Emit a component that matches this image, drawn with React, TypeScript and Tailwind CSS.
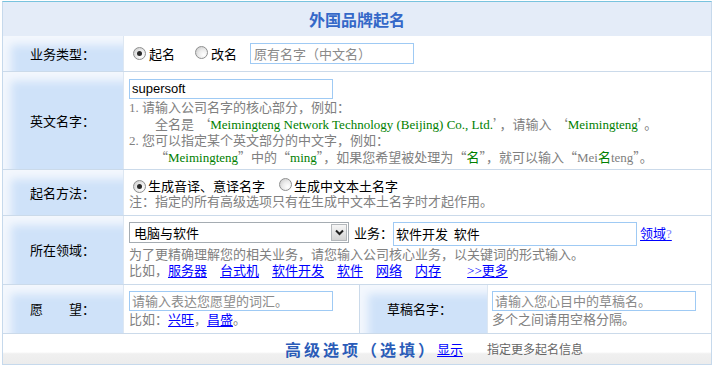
import * as React from "react"

const cjk = "font-['Noto_Sans_CJK_SC',sans-serif]"

function Q({ children }: { children: React.ReactNode }) {
  return <span className={cjk}>{children}</span>
}

function G({ children }: { children: React.ReactNode }) {
  return <span className="text-[#008000]">{children}</span>
}

function A({ children, className = "" }: { children: React.ReactNode; className?: string }) {
  return <a className={"text-[#0000ff] underline underline-offset-2 " + className}>{children}</a>
}

function Radio({ checked }: { checked?: boolean }) {
  return (
    <span className="inline-flex h-[13px] w-[13px] shrink-0 items-center justify-center rounded-full border border-[#8e8f8f] bg-[radial-gradient(circle_at_70%_70%,#ffffff_0%,#ececec_45%,#c4c4c4_100%)]">
      {checked && <span className="h-[5px] w-[5px] rounded-full bg-[#2a2a2a]" />}
    </span>
  )
}

function Label({ children, className = "" }: { children: React.ReactNode; className?: string }) {
  return (
    <div
      className={
        "flex shrink-0 items-center border-r border-[#dde7f2] bg-[#cfe2f9] pl-[27px] text-black shadow-[inset_12px_13px_8px_-4px_#f3f7fd] " +
        cjk +
        " " +
        className
      }
    >
      {children}
    </div>
  )
}

export default function App() {
  return (
    <div className="h-[368px] w-[714px] bg-white pl-[2px] pt-[1px] font-['Liberation_Serif','Noto_Sans_CJK_SC',serif] text-[13px] leading-[16px] text-[#808080]">
      <div className="flex h-[364px] w-[710px] flex-col border border-[#c6d9ec] border-t-[#78c3de]">
        {/* title */}
        <div className={"flex h-[34px] shrink-0 items-center justify-center bg-[#e4ecf8] text-[16px] font-bold text-[#3468c8] " + cjk}>
          外国品牌起名
        </div>

        {/* 业务类型 */}
        <div className="flex h-[36px] shrink-0 border-b border-[#cbdaea]">
          <Label className="w-[121px]">业务类型：</Label>
          <div className={"flex flex-1 items-center pl-[9px] text-black " + cjk}>
            <Radio checked />
            <span className="ml-[3px]">起名</span>
            <span className="ml-[20px]">
              <Radio />
            </span>
            <span className="ml-[3px]">改名</span>
            <div className="ml-[13px] flex h-[21px] w-[164px] items-center border border-[#9fcaf4] pl-[3px] text-[#8a8a8a]">
              原有名字（中文名）
            </div>
          </div>
        </div>

        {/* 英文名字 */}
        <div className="flex h-[98px] shrink-0 border-b border-[#cbdaea]">
          <Label className="w-[121px]">英文名字：</Label>
          <div className="flex-1 pl-[5px] pt-[7px]">
            <div className="flex h-[20px] w-[204px] items-center border border-[#9fcaf4] pl-[2px] font-['Liberation_Sans',sans-serif] text-black">
              supersoft
            </div>
            <div className="mt-[1px]">1. 请输入公司名字的核心部分，例如：</div>
            <div className="pl-[26px]">
              全名是 <Q>‘</Q>
              <G>Meimingteng Network Technology (Beijing) Co., Ltd.</G>
              <Q>’</Q>，请输入 <Q>‘</Q>
              <G>Meimingteng</G>
              <Q>’</Q>。
            </div>
            <div>2. 您可以指定某个英文部分的中文字，例如：</div>
            <div className="pl-[26px]">
              <Q>“</Q>
              <G>Meimingteng</G>
              <Q>”</Q>中的<Q>“</Q>
              <G>ming</G>
              <Q>”</Q>，如果您希望被处理为<Q>“</Q>
              <G>名</G>
              <Q>”</Q>，就可以输入<Q>“</Q>Mei<G>名</G>teng<Q>”</Q>。
            </div>
          </div>
        </div>

        {/* 起名方法 */}
        <div className="flex h-[46px] shrink-0 border-b border-[#cbdaea]">
          <Label className="w-[121px]">起名方法：</Label>
          <div className="flex-1 pl-[5px] pt-[8px]">
            <div className={"flex items-center pl-[4px] text-black " + cjk}>
              <Radio checked />
              <span className="ml-[2px]">生成音译、意译名字</span>
              <span className="ml-[14px]">
                <Radio />
              </span>
              <span className="ml-[2px]">生成中文本土名字</span>
            </div>
            <div>注：指定的所有高级选项只有在生成中文本土名字时才起作用。</div>
          </div>
        </div>

        {/* 所在领域 */}
        <div className="flex h-[69px] shrink-0 border-b border-[#cbdaea]">
          <Label className="w-[121px]">所在领域：</Label>
          <div className="flex-1 pl-[5px] pt-[6px]">
            <div className="flex h-[25px] items-start">
              <div className={"flex h-[21px] w-[220px] items-center justify-between border border-[#a5acb2] pl-[4px] pr-[1px] text-black " + cjk}>
                <span>电脑与软件</span>
                <span className="flex h-[17px] w-[16px] items-center justify-center border border-[#b4b8bc] bg-[linear-gradient(#f6f6f6,#d4d4d4)]">
                  <svg width="9" height="7" viewBox="0 0 9 7">
                    <path d="M1 1.5 L4.5 5 L8 1.5" stroke="#222" strokeWidth="2" fill="none" />
                  </svg>
                </span>
              </div>
              <span className={"ml-[5px] mt-[3px] text-black " + cjk}>业务：</span>
              <div className={"flex h-[24px] w-[244px] items-center border border-[#9fcaf4] pl-[2px] text-black " + cjk}>
                软件开发&nbsp;&nbsp;软件
              </div>
              <A className={"ml-[3px] mt-[3px] " + cjk}>
                领域<span className="font-['Liberation_Serif',serif] text-[#8080ff]">?</span>
              </A>
            </div>
            <div>为了更精确理解您的相关业务，请您输入公司核心业务，以关键词的形式输入。</div>
            <div className="flex">
              <span>比如，</span>
              <A>服务器</A>
              <A className="ml-[13px]">台式机</A>
              <A className="ml-[13px]">软件开发</A>
              <A className="ml-[13px]">软件</A>
              <A className="ml-[13px]">网络</A>
              <A className="ml-[13px]">内存</A>
              <A className="ml-[26px]">&gt;&gt;更多</A>
            </div>
          </div>
        </div>

        {/* 愿望 / 草稿名字 */}
        <div className="flex h-[49px] shrink-0 border-b border-[#cbdaea]">
          <Label className="w-[121px]">愿　　望：</Label>
          <div className="w-[236px] shrink-0 border-r border-[#cbdaea] pl-[5px] pt-[6px]">
            <div className={"flex h-[20px] w-[204px] items-center border border-[#9fcaf4] pl-[2px] text-[#8a8a8a] " + cjk}>
              请输入表达您愿望的词汇。
            </div>
            <div className="mt-[1px]">
              比如：<A>兴旺</A>，<A>昌盛</A>。
            </div>
          </div>
          <Label className="w-[128px]">草稿名字：</Label>
          <div className="flex-1 pl-[4px] pt-[6px]">
            <div className={"flex h-[20px] w-[204px] items-center border border-[#9fcaf4] pl-[2px] text-[#8a8a8a] " + cjk}>
              请输入您心目中的草稿名。
            </div>
            <div className="mt-[1px]">多个之间请用空格分隔。</div>
          </div>
        </div>

        {/* 高级选项 */}
        <div className="flex flex-1 items-center bg-[linear-gradient(to_bottom,#ffffff_0%,#ffffff_60%,#f0f0f0_66%,#ececec_100%)] pl-[282px]">
          <span className={"text-[16px] font-bold tracking-[3px] text-[#2b5cb8] " + cjk}>高级选项（选填）</span>
          <A className={cjk}>显示</A>
          <span className={"ml-[24px] text-[12px] text-[#666666] " + cjk}>指定更多起名信息</span>
        </div>
      </div>
    </div>
  )
}
